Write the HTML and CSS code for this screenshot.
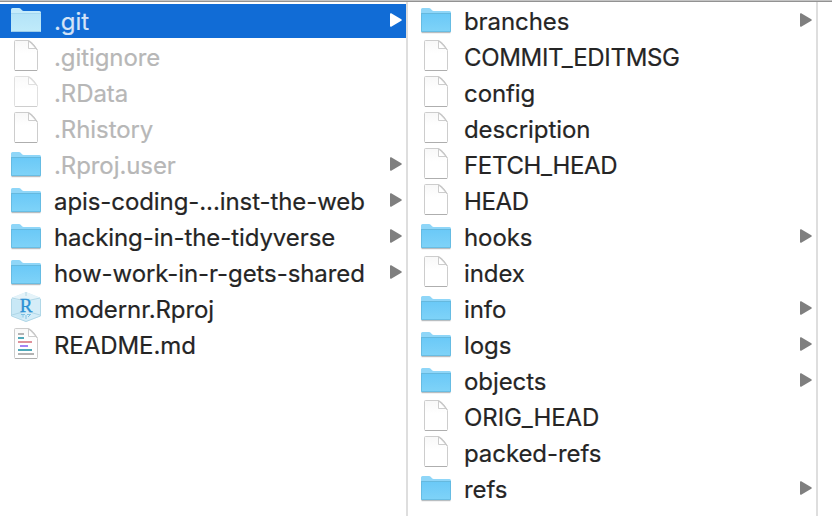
FILE: index.html
```
<!DOCTYPE html>
<html lang="en">
<head>
<meta charset="utf-8">
<title>Files</title>
<link rel="stylesheet" href="styles.css">
</head>
<body>
<svg class="defs" aria-hidden="true">
  <defs>
    <linearGradient id="blue" x1="0" y1="0" x2="0" y2="1"><stop offset="0" stop-color="#6bc9f7"/><stop offset="1" stop-color="#7fd3f8"/></linearGradient>
    <linearGradient id="pale" x1="0" y1="0" x2="0" y2="1"><stop offset="0" stop-color="#b3e3f8"/><stop offset="1" stop-color="#c0ebfa"/></linearGradient>
    <linearGradient id="paper" x1="0" y1="0" x2="0" y2="1"><stop offset="0" stop-color="#f8f8f8"/><stop offset=".45" stop-color="#fff"/></linearGradient>
    <symbol id="folder" viewBox="0 0 32 36">
      <path d="M1.500 29.500h29" stroke="#b9bec1" stroke-width="1.400"/>
      <path d="M1 6.500Q1 5 2.500 5H9q1 0 1.700.8L12 7.200q.7.8 1.700.8H29.500Q31 8 31 9.500V27.500Q31 29 29.500 29H2.500Q1 29 1 27.500z" fill="#8fd6f8"/>
      <path d="M1 11h30v16.500Q31 29 29.500 29h-27Q1 29 1 27.500z" fill="url(#blue)"/>
      <path d="M1 10.500h30" stroke="#65b9df"/>
      <path d="M1.500 11v17.500h29V11" fill="none" stroke="#61b6dc" stroke-opacity=".75"/>
    </symbol>
    <symbol id="folder-open" viewBox="0 0 32 36">
      <path d="M1 6.500Q1 5 2.500 5H9q1 0 1.700.8L12 7.200q.7.8 1.700.8H29.500Q31 8 31 9.500V27.500Q31 29 29.500 29H2.500Q1 29 1 27.500z" fill="#c4ebfb"/>
      <path d="M1 10h30v17.500Q31 29 29.500 29h-27Q1 29 1 27.500z" fill="url(#pale)"/>
      <path d="M1 10.500h30" stroke="#a4d8f0"/>
      <path d="M2 28.500h28" stroke="#9bccea"/>
    </symbol>
    <symbol id="file" viewBox="0 0 32 36">
      <path d="M5.500 1.500H18.500Q23 3 27.500 11.500V30.500Q27.500 31.500 26.500 31.500H5.500Q4.500 31.500 4.500 30.500V2.500Q4.500 1.500 5.500 1.500z" fill="url(#paper)" stroke="#cdcdcd"/>
      <path d="M5 31.500h22" stroke="#aaa" stroke-width=".9"/>
      <path d="M18.500 1.500V9.500h7.500z" fill="#fff" stroke="#cdcdcd"/>
      <path d="M18.500 2Q23 4 27.300 11" fill="none" stroke="#c5c5c5"/>
    </symbol>
    <symbol id="markdown" viewBox="0 0 32 36">
      <use href="#file" width="32" height="36"/>
      <g stroke-width="2"><path d="M8 7h6M8 27h16" stroke="#b3b3b3"/><path d="M8 11h6M8 23h14" stroke="#4fa8b8"/><path d="M8 15h14" stroke="#df929c"/><path d="M10 19h8" stroke="#a585f5"/></g>
    </symbol>
    <symbol id="rproj" viewBox="0 0 32 36">
      <path d="M16 1 30 6.500 31 8V25L16 31 1 25V8L2 6.500z" fill="#d5edf8"/>
      <path d="M2 7 16 1 30 7 16 10z" fill="#e5f3f9"/>
      <path d="M2 8 12 10V28L2 24z" fill="#c8e8f6"/>
      <path d="M16 1V5M2 24l14-4 14 4M2 7l14 3 14-3M1.500 8v17L16 30.500 30.500 25V8" fill="none" stroke="#a6d0e2" stroke-width=".8"/>
      <path d="M12 7h8v14h-8z" fill="#d4edf8"/>
      <text x="16" y="20.500" text-anchor="middle" class="letter">R</text>
      <path d="M11 23.500h4m2 0h4M13 23.500v3M16 24v4m4-4-2 2" fill="none" stroke="#6bb9dd" stroke-opacity=".8"/>
    </symbol>
    <symbol id="arrow" viewBox="0 0 12 14">
      <path d="M0 1Q0 0 1.200.3L11.300 6.200Q12.300 7 11.300 7.700L1.200 13.700Q0 14 0 13z" fill="currentColor"/>
    </symbol>
  </defs>
</svg>
<main class="browser">
  <ul class="column first">
    <li class="row selected"><svg class="icon"><use href="#folder-open"/></svg><span>.git</span><svg class="arrow"><use href="#arrow"/></svg></li>
    <li class="row hidden"><svg class="icon"><use href="#file"/></svg><span>.gitignore</span></li>
    <li class="row hidden"><svg class="icon faded"><use href="#file"/></svg><span>.RData</span></li>
    <li class="row hidden"><svg class="icon"><use href="#file"/></svg><span>.Rhistory</span></li>
    <li class="row hidden"><svg class="icon"><use href="#folder"/></svg><span>.Rproj.user</span><svg class="arrow"><use href="#arrow"/></svg></li>
    <li class="row"><svg class="icon"><use href="#folder"/></svg><span>apis-coding-...inst-the-web</span><svg class="arrow"><use href="#arrow"/></svg></li>
    <li class="row"><svg class="icon"><use href="#folder"/></svg><span>hacking-in-the-tidyverse</span><svg class="arrow"><use href="#arrow"/></svg></li>
    <li class="row"><svg class="icon"><use href="#folder"/></svg><span>how-work-in-r-gets-shared</span><svg class="arrow"><use href="#arrow"/></svg></li>
    <li class="row"><svg class="icon"><use href="#rproj"/></svg><span>modernr.Rproj</span></li>
    <li class="row"><svg class="icon"><use href="#markdown"/></svg><span>README.md</span></li>
  </ul>
  <ul class="column second">
    <li class="row"><svg class="icon"><use href="#folder"/></svg><span>branches</span><svg class="arrow"><use href="#arrow"/></svg></li>
    <li class="row caps"><svg class="icon"><use href="#file"/></svg><span>COMMIT_EDITMSG</span></li>
    <li class="row"><svg class="icon"><use href="#file"/></svg><span>config</span></li>
    <li class="row"><svg class="icon"><use href="#file"/></svg><span>description</span></li>
    <li class="row caps"><svg class="icon"><use href="#file"/></svg><span>FETCH_HEAD</span></li>
    <li class="row caps"><svg class="icon"><use href="#file"/></svg><span>HEAD</span></li>
    <li class="row"><svg class="icon"><use href="#folder"/></svg><span>hooks</span><svg class="arrow"><use href="#arrow"/></svg></li>
    <li class="row"><svg class="icon"><use href="#file"/></svg><span>index</span></li>
    <li class="row"><svg class="icon"><use href="#folder"/></svg><span>info</span><svg class="arrow"><use href="#arrow"/></svg></li>
    <li class="row"><svg class="icon"><use href="#folder"/></svg><span>logs</span><svg class="arrow"><use href="#arrow"/></svg></li>
    <li class="row"><svg class="icon"><use href="#folder"/></svg><span>objects</span><svg class="arrow"><use href="#arrow"/></svg></li>
    <li class="row"><svg class="icon"><use href="#file"/></svg><span>ORIG_HEAD</span></li>
    <li class="row"><svg class="icon"><use href="#file"/></svg><span>packed-refs</span></li>
    <li class="row"><svg class="icon"><use href="#folder"/></svg><span>refs</span><svg class="arrow"><use href="#arrow"/></svg></li>
  </ul>
</main>
</body>
</html>
```
FILE: styles.css
```
* { box-sizing: border-box; }
body { margin: 0; background: #fff; overflow: hidden; }
.defs { position: absolute; width: 0; height: 0; }
.browser {
  display: flex;
  height: 516px;
  border-top: 1px solid #c4c4c4;
  box-shadow: inset 0 1px #929292;
  padding-top: 1px;
  font: 24px/34px Inter, "Liberation Sans", sans-serif;
  letter-spacing: -.08px;
  color: #252525;
}
.column {
  list-style: none;
  margin: 0;
  padding: 2px 0 0;
  border-right: 2px solid #dedede;
}
.first { width: 408px; }
.second { width: 410px; }
.row {
  display: flex;
  align-items: center;
  height: 34px;
  margin-bottom: 2px;
  padding: 0 4px 0 10px;
  white-space: nowrap;
}
.icon { width: 32px; height: 36px; flex: none; margin-right: 12px; }
.faded { opacity: .6; }
.row span { flex: 1; padding-top: 2px; -webkit-text-stroke: .2px currentColor; }
.caps { letter-spacing: -.33px; }
.second .row { padding-left: 12px; }
.arrow { width: 12px; height: 14px; color: #7f7f7f; margin-top: -2px; }
.hidden { color: #b7b7b7; }
.hidden .arrow { color: #7f7f7f; }
.selected { background: #116cd6; color: #d5e3f7; }
.selected .arrow { color: #fff; }
.letter { font: 19px "Liberation Serif", serif; fill: #2c91d4; stroke: #2c91d4; stroke-width: .3; }
```
